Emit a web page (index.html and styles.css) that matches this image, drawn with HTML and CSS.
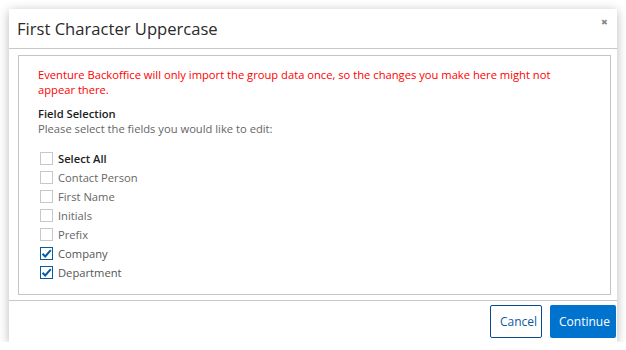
FILE: index.html
```html
<!DOCTYPE html>
<html lang="en">
  <head>
    <meta charset="UTF-8" />
    <title>First Character Uppercase</title>
    <link rel="stylesheet" href="styles.css">
  </head>
  <body>
    <div class="dialog">
      <div class="dialog-header">
        <h2>First Character Uppercase</h2>
        <span class="close">&#x2716;</span>
      </div>

      <div class="dialog-body">
        <div class="panel">
          <p class="warning">
            Eventure Backoffice will only import the group data once, so the changes you make here might not<br>
            appear there.
          </p>

          <div class="field-title">Field Selection</div>
          <div class="field-hint">Please select the fields you would like to edit:</div>

          <ul class="field-list">
            <li class="select-all"><span class="check"></span>Select All</li>
            <li><span class="check"></span>Contact Person</li>
            <li><span class="check"></span>First Name</li>
            <li><span class="check"></span>Initials</li>
            <li><span class="check"></span>Prefix</li>
            <li class="on">
              <span class="check">
                <svg viewBox="0 0 13 13" width="13" height="13"><path d="M2.5 6.8 L5.2 9.5 L10.8 3.2" fill="none" stroke="#0b5aa0" stroke-width="2"/></svg>
              </span>Company
            </li>
            <li class="on">
              <span class="check">
                <svg viewBox="0 0 13 13" width="13" height="13"><path d="M2.5 6.8 L5.2 9.5 L10.8 3.2" fill="none" stroke="#0b5aa0" stroke-width="2"/></svg>
              </span>Department
            </li>
          </ul>
        </div>
      </div>

      <div class="dialog-footer">
        <button class="btn btn-outline">Cancel</button>
        <button class="btn btn-primary">Continue</button>
      </div>
    </div>
  </body>
</html>
```

FILE: styles.css
```css
body {
  margin: 0;
  background: #fff;
  font-family: "Open Sans", sans-serif;
  color: #333;
}

.dialog {
  margin: 9px 0 0 9px;
  width: 608px;
  height: 333px;
  box-sizing: border-box;
  background: #fff;
  box-shadow: 0 2px 10px rgba(0, 0, 0, 0.28);
  display: flex;
  flex-direction: column;
}

.dialog-header {
  height: 40px;
  border-bottom: 1px solid #c8c8c8;
  box-sizing: border-box;
  display: flex;
  justify-content: space-between;
  padding: 0 9px 0 8px;
}

.dialog-header h2 {
  margin: 0;
  font-size: 16.6px;
  font-weight: 400;
  color: #2a2a2a;
  line-height: 40px;
}

.close {
  font-size: 8px;
  color: #888;
  margin-top: 7px;
}

.dialog-body {
  padding: 6px 6px 5px 9px;
}

.panel {
  height: 240px;
  box-sizing: border-box;
  border: 1px solid #c4c4c4;
  padding: 11px 10px 0 19px;
  font-size: 11.2px;
}

.warning {
  margin: 0;
  color: #f00;
  line-height: 15px;
}

.field-title {
  margin-top: 9px;
  font-weight: 600;
  color: #222;
  line-height: 15px;
}

.field-hint {
  color: #666;
  line-height: 15px;
}

.field-list {
  list-style: none;
  margin: 13px 0 0 2px;
  padding: 0;
}

.field-list li {
  display: flex;
  align-items: center;
  height: 19px;
  color: #666;
}

.field-list li.select-all {
  color: #222;
  font-weight: 600;
}

.field-list li.on {
  color: #555;
}

.check {
  width: 13px;
  height: 13px;
  box-sizing: border-box;
  border: 1px solid #c8c8c8;
  margin-right: 5px;
  display: flex;
}

.on .check {
  border-color: #0b5aa0;
}

.check svg {
  margin: -1px;
}

.dialog-footer {
  border-top: 1px solid #c8c8c8;
  display: flex;
  justify-content: flex-end;
  gap: 8px;
  padding: 4px 1px 0 0;
}

.btn {
  height: 33px;
  font-family: "Open Sans", sans-serif;
  font-size: 12px;
  border-radius: 2px;
  padding: 0 9px;
  cursor: pointer;
}

.btn-outline {
  background: #fff;
  color: #0b5aa0;
  border: 1px solid #0b4a8a;
  width: 52px;
}

.btn-primary {
  background: #0073cf;
  color: #fff;
  border: none;
  width: 66px;
}
```
